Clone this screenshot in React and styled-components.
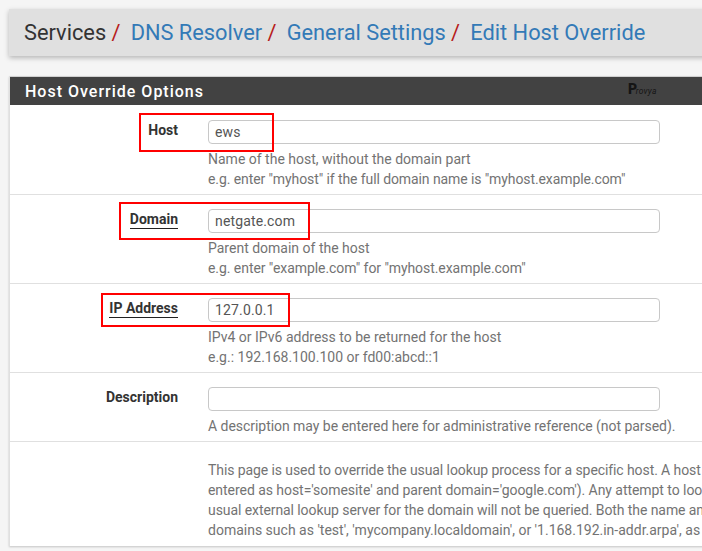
import React from 'react';
import styled, { createGlobalStyle } from 'styled-components';

const GlobalStyle = createGlobalStyle`
  html, body {
    margin: 0;
    padding: 0;
    background: #f5f5f5;
    overflow: hidden;
  }
  body {
    width: 702px;
    height: 551px;
    font-family: Roboto, "Liberation Sans", sans-serif;
    font-size: 14px;
    color: #212121;
  }
`;

const Page = styled.div`
  width: 702px;
  height: 551px;
  overflow: hidden;
  padding: 9px 0 0 9px;
  box-sizing: border-box;
`;

const Crumbs = styled.ol`
  display: flex;
  align-items: center;
  list-style: none;
  width: 760px;
  height: 47px;
  margin: 0 0 20px;
  padding: 0 0 0 15px;
  box-sizing: border-box;
  background: #e0e0e0;
  box-shadow: 0 2px 5px rgba(0, 0, 0, 0.26);
  font-size: 21.8px;
  white-space: nowrap;
`;

const Crumb = styled.li`
  color: ${(p) => (p.$link ? '#337ab7' : '#333')};

  &:not(:last-child)::after {
    content: '/';
    color: #b71c1c;
    margin: 0 10.2px 0 5.3px;
  }
`;

const Panel = styled.section`
  width: 760px;
  background: #fff;
  border-left: 1px solid #e0e0e0;
  box-shadow: 0 1px 2px rgba(0, 0, 0, 0.2);
`;

const PanelHead = styled.header`
  position: relative;
  height: 28px;
  padding-left: 15px;
  background: #424242;
  border-top: 1px solid #d0d0d0;
  color: #fff;
  font-size: 16px;
  font-weight: 500;
  line-height: 29px;
  letter-spacing: 1px;
`;

const Watermark = styled.span`
  position: absolute;
  left: 618px;
  top: -2px;
  color: #151515;
  font-size: 8.5px;
  font-style: italic;
  font-weight: 400;
  letter-spacing: 0.3px;

  b {
    font-size: 14px;
    font-style: normal;
    font-weight: 900;
    letter-spacing: -1.5px;
  }
`;

const Row = styled.div`
  position: relative;
  display: grid;
  grid-template-columns: 168px 452px;
  column-gap: 30px;
  padding: 14px 0 5px;
  border-bottom: 1px solid #e0e0e0;

  &:first-of-type {
    padding-top: 15px;
  }
`;

const Label = styled.label`
  justify-self: end;
  align-self: start;
  margin-top: 2px;
  font-weight: 700;
  line-height: 17px;
  color: #333;
  border-bottom: ${(p) => (p.$required ? '1px solid #212121' : 'none')};
`;

const Input = styled.input`
  display: block;
  width: 100%;
  height: 24px;
  padding: 0 6px;
  box-sizing: border-box;
  border: 1px solid #c8c8c8;
  border-radius: 4px;
  background: #fff;
  color: #555;
  font-family: inherit;
  font-size: 14px;
  letter-spacing: 0.15px;
  outline: none;
`;

const Help = styled.div`
  margin-top: 5px;
`;

const Line = styled.div`
  color: #737373;
  font-size: 14px;
  line-height: 20px;
  letter-spacing: ${(p) => p.$track || 0}px;
  white-space: nowrap;
`;

const Highlight = styled.span`
  position: absolute;
  left: ${(p) => p.$left}px;
  top: ${(p) => p.$top}px;
  width: ${(p) => p.$width}px;
  height: ${(p) => p.$height}px;
  box-sizing: border-box;
  border: 2px solid #f00;
  pointer-events: none;
`;

const Note = styled.div`
  padding: 18px 0 6px 198px;
`;

const fields = [
  {
    label: 'Host',
    value: 'ews',
    help: [
      { text: 'Name of the host, without the domain part' },
      { text: 'e.g. enter "myhost" if the full domain name is "myhost.example.com"', track: -0.09 },
    ],
    box: { $left: 129, $top: 8, $width: 135, $height: 39 },
  },
  {
    label: 'Domain',
    required: true,
    value: 'netgate.com',
    help: [
      { text: 'Parent domain of the host' },
      { text: 'e.g. enter "example.com" for "myhost.example.com"', track: -0.06 },
    ],
    box: { $left: 109, $top: 7, $width: 191, $height: 38 },
  },
  {
    label: 'IP Address',
    required: true,
    value: '127.0.0.1',
    help: [
      { text: 'IPv4 or IPv6 address to be returned for the host' },
      { text: 'e.g.: 192.168.100.100 or fd00:abcd::1' },
    ],
    box: { $left: 91, $top: 9, $width: 189, $height: 34 },
  },
  {
    label: 'Description',
    value: '',
    help: [{ text: 'A description may be entered here for administrative reference (not parsed).', track: -0.04 }],
  },
];

const noteLines = [
  { text: 'This page is used to override the usual lookup process for a specific host. A host is defined by its name', track: -0.09 },
  { text: "entered as host='somesite' and parent domain='google.com'). Any attempt to lookup that host will", track: -0.05 },
  { text: 'usual external lookup server for the domain will not be queried. Both the name and parent domain', track: -0.08 },
  { text: "domains such as 'test', 'mycompany.localdomain', or '1.168.192.in-addr.arpa', as well as usual" },
];

const App = () => (
  <Page>
    <GlobalStyle />
    <Crumbs>
      <Crumb>Services</Crumb>
      <Crumb $link>DNS Resolver</Crumb>
      <Crumb $link>General Settings</Crumb>
      <Crumb $link>Edit Host Override</Crumb>
    </Crumbs>

    <Panel>
      <PanelHead>
        Host Override Options
        <Watermark>
          <b>P</b>rovya
        </Watermark>
      </PanelHead>

      {fields.map((f) => (
        <Row key={f.label}>
          <Label $required={f.required}>{f.label}</Label>
          <div>
            <Input readOnly value={f.value} />
            <Help>
              {f.help.map((line) => (
                <Line key={line.text} $track={line.track}>
                  {line.text}
                </Line>
              ))}
            </Help>
          </div>
          {f.box && <Highlight {...f.box} />}
        </Row>
      ))}

      <Note>
        {noteLines.map((line) => (
          <Line key={line.text} $track={line.track}>
            {line.text}
          </Line>
        ))}
      </Note>
    </Panel>
  </Page>
);

export default App;
